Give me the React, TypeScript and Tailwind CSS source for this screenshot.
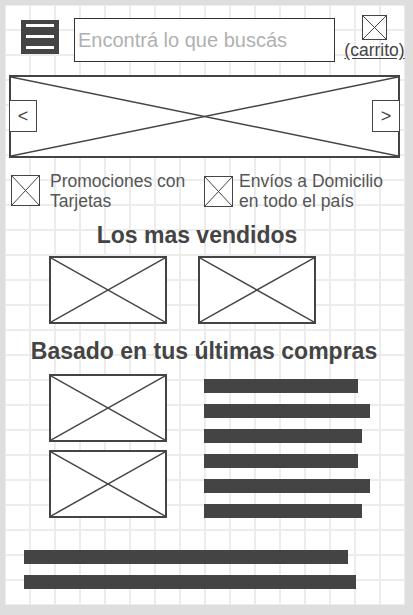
import React from "react";

function XBox({ className, stroke = 1.5 }: { className: string; stroke?: number }) {
  return (
    <div className={"relative bg-white " + className}>
      <svg className="absolute inset-0 w-full h-full" viewBox="0 0 100 100" preserveAspectRatio="none">
        <line x1="0" y1="0" x2="100" y2="100" stroke="#444" strokeWidth={stroke} vectorEffect="non-scaling-stroke" />
        <line x1="100" y1="0" x2="0" y2="100" stroke="#444" strokeWidth={stroke} vectorEffect="non-scaling-stroke" />
      </svg>
    </div>
  );
}

export default function App() {
  const bars = [154, 166, 158, 154, 166, 158];
  return (
    <div className="w-[413px] h-[615px] bg-[#dedede] p-[5px] font-['Liberation_Sans',Arial,sans-serif]">
      <div className="w-[400px] h-[600px] flex flex-col bg-white bg-[linear-gradient(to_right,#ececec_2px,transparent_2px),linear-gradient(to_bottom,#ececec_2px,transparent_2px)] bg-[size:25px_25px] bg-[position:-1px_-1px]">
        {/* header */}
        <div className="flex items-start h-[70px] shrink-0">
          <div className="ml-[16px] mt-[15px] w-[38px] h-[34px] bg-[#444] flex flex-col items-center pt-[4px] gap-[8px]">
            <div className="w-[28px] h-[3px] bg-white" />
            <div className="w-[28px] h-[3px] bg-white" />
            <div className="w-[28px] h-[3px] bg-white" />
          </div>
          <div className="ml-[15px] mt-[13px] w-[261px] h-[44px] border border-[#333] bg-white flex items-center pl-[3px] text-[20px] text-[#b0b0b0]">
            Encontrá lo que buscás
          </div>
          <div className="ml-[9px] w-[61px] flex flex-col items-center">
            <XBox className="mt-[10px] w-[25px] h-[25px] border border-[#444]" stroke={1} />
            <span className="text-[17.5px] leading-[20px] text-[#444] underline underline-offset-2">(carrito)</span>
          </div>
        </div>

        {/* carousel */}
        <div className="relative ml-[4px] w-[391px] h-[83px] shrink-0">
          <XBox className="w-full h-full border-2 border-[#444]" stroke={1.5} />
          <div className="absolute left-0 top-[25px] w-[28px] h-[32px] border border-[#444] bg-white flex items-center justify-center text-[18px] text-[#444]">
            &lt;
          </div>
          <div className="absolute right-0 top-[25px] w-[28px] h-[32px] border border-[#444] bg-white flex items-center justify-center text-[18px] text-[#444]">
            &gt;
          </div>
        </div>

        {/* promos */}
        <div className="flex mt-[13px] shrink-0 text-[17.5px] leading-[20px] text-[#555]">
          <div className="flex ml-[6px] w-[193px]">
            <XBox className="mt-[4px] w-[29px] h-[31px] border border-[#444] shrink-0" stroke={1} />
            <div className="ml-[10px]">
              Promociones con
              <br />
              Tarjetas
            </div>
          </div>
          <div className="flex">
            <XBox className="mt-[5px] w-[29px] h-[31px] border border-[#444] shrink-0" stroke={1} />
            <div className="ml-[6px]">
              Envíos a Domicilio
              <br />
              en todo el país
            </div>
          </div>
        </div>

        {/* los mas vendidos */}
        <div className="mt-[12px] pr-[16px] text-center text-[23px] leading-[24px] font-bold text-[#444] shrink-0">
          Los mas vendidos
        </div>
        <div className="flex mt-[9px] ml-[44px] gap-[31px] shrink-0">
          <XBox className="w-[118px] h-[68px] border-2 border-[#444]" />
          <XBox className="w-[118px] h-[68px] border-2 border-[#444]" />
        </div>

        {/* basado */}
        <div className="mt-[15px] pr-[2px] text-center text-[23px] leading-[24px] font-bold text-[#444] shrink-0">
          Basado en tus últimas compras
        </div>
        <div className="flex mt-[11px] ml-[44px] shrink-0">
          <div className="flex flex-col gap-[8px]">
            <XBox className="w-[118px] h-[68px] border-2 border-[#444]" />
            <XBox className="w-[118px] h-[68px] border-2 border-[#444]" />
          </div>
          <div className="ml-[37px] mt-[5px] flex flex-col gap-[11px]">
            {bars.map((w, i) => (
              <div key={i} className="h-[14px] bg-[#444]" style={{ width: w }} />
            ))}
          </div>
        </div>

        {/* bottom bars */}
        <div className="mt-[32px] ml-[19px] flex flex-col gap-[11px] shrink-0">
          <div className="w-[324px] h-[14px] bg-[#444]" />
          <div className="w-[332px] h-[14px] bg-[#444]" />
        </div>
      </div>
    </div>
  );
}
